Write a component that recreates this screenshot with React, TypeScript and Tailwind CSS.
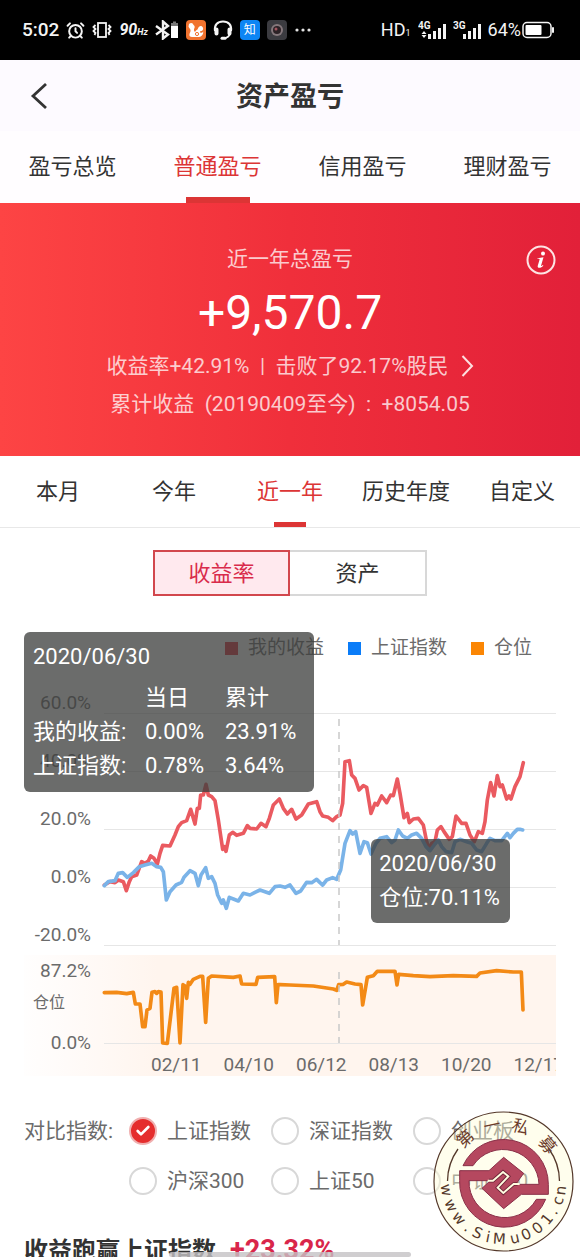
import { useState } from 'react';
import { AlarmClock, Check } from 'lucide-react';
import clsx from 'clsx';

const MAIN_TABS = ['盈亏总览', '普通盈亏', '信用盈亏', '理财盈亏'];
const PERIODS = ['本月', '今年', '近一年', '历史年度', '自定义'];
const INDEXES = ['上证指数', '深证指数', '创业板', '沪深300', '上证50', '中证500'];

const Y_LABELS = ['60.0%', '40.0%', '20.0%', '0.0%', '-20.0%'];
const X_LABELS = ['02/11', '04/10', '06/12', '08/13', '10/20', '12/17'];

type Point = [number, number];

const shift = (points: Point[], dx: number, dy: number) =>
    points.map(([x, y]) => `${x + dx},${y + dy}`).join(' ');

// Series are stored at three units per pixel, one array per half year
const MINE_H1: Point[] = [
    [43, 615], [60, 605], [75, 608], [85, 600], [100, 605], [109, 632], [118, 605], [125, 590], [140, 585], [155, 545],
    [165, 550], [175, 543], [182, 528], [192, 535], [202, 552], [210, 520], [218, 496], [240, 498], [255, 465], [265, 440],
    [275, 428], [290, 422], [302, 388], [315, 432], [322, 385], [328, 385], [332, 345], [340, 345], [348, 313], [355, 345],
    [365, 350], [375, 362], [385, 420], [398, 508], [403, 500], [408, 514], [418, 465], [428, 457], [440, 466], [460, 460],
    [472, 437], [480, 445], [500, 447], [513, 430], [528, 440], [538, 415], [550, 375], [568, 357], [580, 385], [592, 402],
    [605, 388], [618, 417], [635, 405], [655, 372], [680, 365], [690, 395],
];
const MINE_H2: Point[] = [
    [0, 365], [8, 378], [25, 382], [38, 392], [50, 380], [60, 375], [68, 340], [75, 215], [88, 212], [95, 255],
    [105, 265], [117, 300], [130, 287], [140, 292], [153, 370], [165, 340], [172, 345], [185, 318], [200, 338], [212, 315],
    [220, 317], [232, 267], [240, 310], [252, 383], [262, 370], [268, 398], [280, 387], [295, 385], [310, 405], [320, 455],
    [328, 480], [335, 460], [345, 455], [352, 420], [363, 410], [372, 425], [388, 448], [397, 440], [408, 378], [425, 400],
    [438, 400], [450, 435], [463, 455], [475, 425], [487, 430], [495, 395], [502, 330], [512, 278], [522, 318], [532, 257],
    [540, 290], [547, 285], [560, 327], [567, 318], [573, 327], [585, 290], [600, 260], [610, 218],
];
const INDEX_H1: Point[] = [
    [43, 617], [55, 605], [75, 602], [85, 580], [98, 578], [112, 592], [130, 578], [148, 560], [165, 555], [185, 550],
    [200, 560], [212, 562], [220, 575], [229, 660], [240, 635], [258, 615], [275, 607], [282, 592], [300, 572], [315, 580],
    [325, 617], [333, 585], [347, 563], [355, 595], [365, 590], [375, 610], [383, 645], [395, 670], [400, 660], [409, 685],
    [418, 652], [430, 657], [445, 663], [460, 640], [480, 645], [495, 637], [510, 630], [525, 635], [538, 640], [555, 620],
    [570, 618], [585, 622], [600, 615], [618, 640], [632, 633], [650, 607], [665, 608], [680, 598], [690, 608],
];
const INDEX_H2: Point[] = [
    [0, 578], [8, 585], [20, 570], [38, 563], [50, 568], [62, 540], [75, 460], [90, 422], [98, 432], [107, 425],
    [120, 490], [132, 455], [142, 458], [153, 492], [168, 460], [180, 445], [200, 440], [215, 458], [225, 450], [235, 420],
    [248, 438], [262, 445], [275, 435], [290, 430], [305, 445], [318, 470], [330, 482], [345, 462], [355, 450], [365, 470],
    [378, 485], [395, 488], [405, 455], [420, 448], [440, 455], [455, 460], [470, 480], [485, 485], [500, 460], [510, 445],
    [525, 452], [545, 452], [562, 430], [570, 443], [580, 430], [592, 418], [600, 418], [608, 420],
];
const POSITION_H1: Point[] = [
    [313, 128], [350, 127], [380, 131], [400, 127], [406, 162], [420, 162], [428, 230], [435, 230], [441, 180], [450, 175],
    [456, 127], [465, 125], [470, 130], [475, 125], [483, 126], [488, 279], [502, 280], [522, 115], [530, 112], [540, 279],
    [549, 104], [555, 108], [560, 145], [565, 97], [570, 103], [580, 88], [600, 79], [608, 79], [617, 217], [625, 85],
    [635, 78], [700, 82], [720, 78], [725, 102], [768, 103], [773, 82], [824, 80], [829, 158], [834, 104],
];
const POSITION_H2: Point[] = [
    [0, 104], [30, 105], [100, 108], [160, 117], [170, 121], [176, 104], [190, 103], [200, 96], [225, 102], [243, 104],
    [248, 165], [262, 82], [280, 77], [292, 64], [345, 64], [351, 105], [356, 73], [400, 77], [450, 80], [520, 77],
    [590, 79], [600, 69], [650, 62], [700, 66], [724, 66], [729, 180],
];

function Signal({ label, arrows }: { label: string; arrows?: boolean }) {
    return (
        <svg viewBox="0 0 28 20" className="h-5 w-7" fill="#f4f4f4">
            <text x="0" y="9" fontSize="10" fontWeight="700">{label}</text>
            {arrows && <path d="M3.500 14L6 11l2.500 3zM3.500 15L6 18l2.500-3z" />}
            <rect x="10" y="14" width="3" height="5" />
            <rect x="15" y="11" width="3" height="8" />
            <rect x="20" y="8" width="3" height="11" />
            <rect x="25" y="4" width="3" height="15" />
        </svg>
    );
}

function StatusBar() {
    return (
        <div className="flex h-[60px] items-center justify-between bg-black pl-[22px] pr-[26px] text-[#f4f4f4]">
            <div className="flex items-center gap-[7px]">
                <span className="text-[19px] font-medium">5:02</span>
                <AlarmClock className="size-[19px]" strokeWidth={2.5} />
                <svg viewBox="0 0 20 18" className="h-[18px] w-5" fill="none" stroke="#f4f4f4" strokeWidth="1.800" aria-hidden="true">
                    <rect x="6" y="2" width="8" height="14" />
                    <path d="M3.500 4l-2 2 2 2-2 2 2 2-1 2M16.500 4l2 2-2 2 2 2-2 2 1 2" />
                </svg>
                <span className="flex items-baseline font-bold italic">
                    <span className="text-base">90</span>
                    <span className="text-[9px]">Hz</span>
                </span>
                <svg viewBox="0 0 24 20" className="h-5 w-6" aria-hidden="true">
                    <path d="M1 6l12 8.500L8 18.500v-17L13 6 1 14.500" fill="none" stroke="#f4f4f4" strokeWidth="2.400" />
                    <rect x="16" y="3" width="7" height="4" fill="#777" />
                    <rect x="18" y="1.500" width="3" height="2" fill="#777" />
                    <rect x="16" y="6" width="7" height="12" fill="#fff" />
                </svg>
                <svg viewBox="0 0 20 20" className="size-5" aria-hidden="true">
                    <rect width="20" height="20" rx="4" fill="#f1732f" />
                    <path d="M3 4c2-2 4-1 4.500 1 1 .5 1.500 1.500 1 3-1 1.500-.5 3 .5 4 1-2 2.500-2 3-3.500.6-2 2.500-3 4-2 1.800 1.300 1.300 4-.5 4.500-1-.2-1.800.5-1.300 1.500 1 .7 2.500 0 3-1 .3 3.500-2 5.500-5.500 5.500H6c-2 0-3-1.200-2.500-3 .5-1.700 1.300-2.500 1-4C4 8.500 3 8 2.500 6.500z" fill="#fff" />
                    <circle cx="11" cy="14" r="1.600" fill="none" stroke="#f1732f" />
                </svg>
                <svg viewBox="0 0 20 20" className="size-5" fill="none" stroke="#f4f4f4" aria-hidden="true">
                    <path d="M2 11C1 5 4.500 1.500 10 1.500S19 5 18 11M17 14c-1 2.500-3 4-6 4" strokeWidth="2" />
                    <path d="M3.500 9.500v4M16.500 9.500v4" strokeWidth="4" strokeLinecap="round" />
                    <path d="M9 18.200h3" strokeWidth="3" strokeLinecap="round" />
                </svg>
                <span className="flex size-5 items-center justify-center rounded bg-[#0d85f4] text-xs text-white">知</span>
                <svg viewBox="0 0 20 20" className="size-5" aria-hidden="true">
                    <rect width="20" height="20" rx="4" fill="#3b3b40" />
                    <circle cx="10" cy="10" r="6" fill="#85787c" />
                    <circle cx="10" cy="10" r="4" fill="#2c2226" />
                    <circle cx="9" cy="9" r="1.500" fill="#a35560" />
                </svg>
                <svg viewBox="0 0 18 4" className="h-1 w-[18px]" fill="#e4e4e4" aria-hidden="true">
                    <circle cx="3" cy="2" r="1.600" />
                    <circle cx="9" cy="2" r="1.600" />
                    <circle cx="15" cy="2" r="1.600" />
                </svg>
            </div>
            <div className="flex items-center gap-[7px] text-lg">
                <span className="flex items-baseline">
                    HD<span className="text-[9px]">1</span>
                </span>
                <Signal label="4G" arrows />
                <Signal label="3G" />
                <span className="flex items-center">
                    64%
                    <svg viewBox="0 0 33 18" className="h-[18px] w-[33px]" aria-hidden="true">
                        <rect x="2" y="1.500" width="28" height="15" rx="4" fill="none" stroke="#f4f4f4" strokeWidth="1.500" />
                        <rect x="4.500" y="4" width="16" height="10" rx="1" fill="#fff" />
                        <rect x="31" y="6" width="2" height="6" rx="1" fill="#f4f4f4" />
                    </svg>
                </span>
            </div>
        </div>
    );
}

function ProfitChart() {
    return (
        <svg viewBox="0 0 580 400" className="block w-full" role="img" aria-label="收益率走势">
            <defs>
                <linearGradient id="positionBg" x1="0" y1="0" x2="1" y2="0">
                    <stop offset="0" stopColor="#fff5f0" stopOpacity="0.100" />
                    <stop offset="0.250" stopColor="#fff5ee" />
                </linearGradient>
                <clipPath id="plotClip">
                    <rect x="0" y="0" width="556" height="400" />
                </clipPath>
            </defs>
            <rect x="24" y="275" width="532" height="121" fill="url(#positionBg)" />
            <g stroke="#e6e6e6">
                {Y_LABELS.map((label, i) => (
                    <line key={label} x1="104" x2="556" y1={33.5 + i * 58} y2={33.5 + i * 58} />
                ))}
                <line x1="104" x2="556" y1="363.500" y2="363.500" />
            </g>
            <g fill="#6b6b6b" fontSize="19">
                {Y_LABELS.map((label, i) => (
                    <text key={label} x="91" y={29 + i * 58} textAnchor="end">{label}</text>
                ))}
                <text x="91" y="297" textAnchor="end">87.2%</text>
                <text x="33" y="328" fontSize="16">仓位</text>
                <text x="91" y="369" textAnchor="end">0.0%</text>
                <g clipPath="url(#plotClip)">
                    {X_LABELS.map((label, i) => (
                        <text key={label} x={151 + i * 72.5} y="391">{label}</text>
                    ))}
                </g>
            </g>
            <g transform="scale(0.33333)" fill="none" strokeWidth="11" strokeLinejoin="round" strokeLinecap="round">
                <polyline stroke="#ea5a60" points={`${shift(MINE_H1, 270, 0)} ${shift(MINE_H2, 960, 30)}`} />
                <polyline stroke="#7ab3e8" points={`${shift(INDEX_H1, 270, 0)} ${shift(INDEX_H2, 960, 30)}`} />
                <polyline stroke="#f38a16" points={`${shift(POSITION_H1, 0, 810)} ${shift(POSITION_H2, 840, 810)}`} />
            </g>
            <path d="M339 39V265M339 292V363" stroke="#c9c9c9" strokeWidth="1.500" strokeDasharray="7 6" />
        </svg>
    );
}

function DayTooltip() {
    return (
        <div className="absolute top-1.5 left-6 w-1/2 rounded-md bg-[#3c3e3c]/76 px-[9px] pt-2 pb-[9px] text-[22px] leading-[34px] text-white">
            <p>2020/06/30</p>
            <table className="mt-[7px] w-full table-fixed text-left">
                <thead>
                    <tr>
                        <td className="w-28"></td>
                        <th className="w-20 font-normal">当日</th>
                        <th className="font-normal">累计</th>
                    </tr>
                </thead>
                <tbody>
                    <tr>
                        <th className="font-normal">我的收益:</th>
                        <td>0.00%</td>
                        <td>23.91%</td>
                    </tr>
                    <tr>
                        <th className="font-normal">上证指数:</th>
                        <td>0.78%</td>
                        <td>3.64%</td>
                    </tr>
                </tbody>
            </table>
        </div>
    );
}

// Start position and rotation of every glyph set round the seal
const onRing = (angles: number[], radius: number, inward: boolean) => ({
    x: angles.map((a) => (70.5 + radius * Math.sin((a * Math.PI) / 180)).toFixed(1)).join(' '),
    y: angles.map((a) => (70.5 - radius * Math.cos((a * Math.PI) / 180)).toFixed(1)).join(' '),
    rotate: angles.map((a) => (inward ? a - 186 : a + 9).toFixed(1)).join(' '),
});

const SITE_RING = onRing([267, 251, 236, 220, 211, 197, 190, 173, 161, 148, 135, 123, 113, 103], 63, true);
const NAME_RING = onRing([-51, -21, 8, 41], 52, false);

function Seal() {
    return (
        <svg viewBox="0 0 141 141" className="pointer-events-none absolute right-1.5 bottom-[5px] size-[141px]" role="img" aria-label="第一私募">
            <circle cx="70.500" cy="70.500" r="69.500" fill="#fffcd6" fillOpacity="0.450" stroke="#54382a" strokeWidth="1.200" />
            <path d="M14.500 70A56 56 0 0 1 25 38M116 38A56 56 0 0 1 126.500 70" fill="none" stroke="#54382a" strokeWidth="1.300" />
            <text {...NAME_RING} fontSize="17" fill="#6b3a2a">第一私募</text>
            <text {...SITE_RING} fontSize="15" fill="#54382a" className="font-['DejaVu_Sans']">www.SiMu001.cn</text>
            <g transform="translate(20 19) scale(0.33333)" strokeLinejoin="miter">
                <path
                    d="M30 107A134 134 0 0 1 286 163V193H205L152 236L87 175L112 152H48A108 108 0 0 0 250 208H278A134 134 0 0 1 20 152V122H108L152 82L212 130L188 163H258A108 108 0 0 0 60 107Z"
                    fill="#b5485f"
                    stroke="#8a3048"
                    strokeWidth="3"
                />
                {/* Light interlocking hooks inside the diamond */}
                <path d="M108 152H120L150 126L166 139L134 173L151 189L182 162H194" fill="none" stroke="#6e2438" strokeWidth="11" />
                <path d="M104 152H120L150 126L166 139L134 173L151 189L182 162H200" fill="none" stroke="#fffde0" strokeWidth="6" />
            </g>
        </svg>
    );
}

export default function App() {
    const [period, setPeriod] = useState('近一年');
    const [tab, setTab] = useState('普通盈亏');
    const [mode, setMode] = useState('收益率');
    const [index, setIndex] = useState('上证指数');

    return (
        <div className="relative h-screen overflow-hidden bg-white font-[Roboto,'Noto_Sans_CJK_SC',sans-serif] text-[#333]">
            <StatusBar />

            {/* Header */}
            <header className="grid h-[71px] grid-cols-[80px_1fr_80px] items-center bg-[#fdfaff] pt-1">
                <button type="button" aria-label="返回" className="pb-1 pl-[30px]">
                    <svg viewBox="0 0 18 28" className="h-7 w-[18px]" fill="none" stroke="#333" strokeWidth="2.800">
                        <path d="M16 2L3 14l13 12" />
                    </svg>
                </button>
                <h1 className="text-center text-[27px] font-bold">资产盈亏</h1>
            </header>
            <nav className="grid h-[72px] grid-cols-4 bg-[#fffdff] text-[22px]">
                {MAIN_TABS.map((name) => (
                    <button
                        key={name}
                        type="button"
                        onClick={() => setTab(name)}
                        className={clsx('flex flex-col items-center justify-between pt-5', tab === name && 'text-[#dc3535]')}
                    >
                        <span className="leading-8">{name}</span>
                        {tab === name && <span className="h-1.5 w-16 bg-[#dc3535]" />}
                    </button>
                ))}
            </nav>

            {/* Total */}
            <section className="relative flex h-[253px] flex-col items-center bg-linear-to-r from-[#fd4444] via-[#f02f3b] to-[#e22039] pt-10 text-[21px] text-white/75">
                <h2 className="leading-8">近一年总盈亏</h2>
                <p className="mt-2.5 text-5xl leading-14 text-white">+9,570.7</p>
                <a href="#rank" className="mt-1.5 flex items-center gap-3 leading-[38px]">
                    <span className="whitespace-pre">收益率+42.91%  |  击败了92.17%股民</span>
                    <svg viewBox="0 0 13 24" className="h-6 w-[13px]" fill="none" stroke="#fde0e0" strokeWidth="2" aria-hidden="true">
                        <path d="M1.500 2L11 12 1.500 22" />
                    </svg>
                </a>
                <p className="leading-[38px] whitespace-pre">累计收益  (20190409至今)  :  +8054.05</p>
                <button type="button" aria-label="说明" className="absolute top-[42px] right-6">
                    <svg viewBox="0 0 30 30" className="size-[30px]">
                        <circle cx="15" cy="15" r="13.500" fill="none" stroke="#fde4e4" strokeWidth="2" />
                        <circle cx="17" cy="8.500" r="2" fill="#fff" />
                        <path d="M11.500 13.200l6-1-2.400 8.300c-.2.900.4.900 1.700-.5l.6.500c-1.800 2.600-6.300 3.400-5.700.6l1.900-6.500c.2-.8-.8-.8-2.100-.7z" fill="#fff" />
                    </svg>
                </button>
            </section>

            {/* Period */}
            <nav className="grid h-[72px] grid-cols-5 border-b border-[#e8e8e8] text-[22px]">
                {PERIODS.map((name) => (
                    <button
                        key={name}
                        type="button"
                        onClick={() => setPeriod(name)}
                        className={clsx('flex flex-col items-center justify-between pt-5 whitespace-nowrap', period === name && 'text-[#dc3535]')}
                    >
                        <span className="leading-8">{name}</span>
                        {period === name && <span className="h-[5px] w-8 bg-[#dc3535]" />}
                    </button>
                ))}
            </nav>

            <div className="mx-auto mt-[22px] grid h-[46px] w-[274px] grid-cols-2 text-[22px]">
                {['收益率', '资产'].map((name) => (
                    <button
                        key={name}
                        type="button"
                        onClick={() => setMode(name)}
                        className={clsx('border-2', mode === name ? 'border-[#d2474d] bg-[#ffe9ee] text-[#d92b4b]' : 'border-l-0 border-[#d8d8d8]')}
                    >
                        {name}
                    </button>
                ))}
            </div>

            {/* Chart */}
            <section className="relative mt-[30px]">
                <ul className="flex h-[54px] justify-end gap-6 pt-1.5 pr-12 text-[19px] text-[#6b6b6b]">
                    <li className="flex h-8 items-center gap-2.5">
                        <span className="size-[13px] bg-[#e0303c]" />我的收益
                    </li>
                    <li className="flex h-8 items-center gap-2.5">
                        <span className="size-[13px] bg-[#0a7cf8]" />上证指数
                    </li>
                    <li className="flex h-8 items-center gap-2.5">
                        <span className="size-[13px] bg-[#fb8604]" />仓位
                    </li>
                </ul>
                <ProfitChart />
                <DayTooltip />
                <div className="absolute top-[213px] left-[64%] rounded-md bg-[#3c3e3c]/76 py-2 pr-2.5 pl-2 text-[22px] leading-[34px] text-white">
                    <p>2020/06/30</p>
                    <p>仓位:70.11%</p>
                </div>
            </section>

            <div role="radiogroup" aria-labelledby="compare" className="mt-[25px] flex pl-6 text-[21px] text-[#6b6b6b]">
                <span id="compare" className="w-[105px] shrink-0 leading-[52px]">对比指数:</span>
                <div className="grid shrink-0 grid-cols-[142px_142px_142px]">
                    {INDEXES.map((name) => (
                        <label key={name} className="flex h-[50px] items-center gap-2.5 pt-0.5">
                            <span className="relative flex">
                                <input
                                    type="radio"
                                    name="index"
                                    checked={index === name}
                                    onChange={() => setIndex(name)}
                                    className="size-7 appearance-none rounded-full border-2 border-[#d8d8d8] bg-white checked:border-[#f0b0b0] checked:bg-[#e52d2d]"
                                />
                                {index === name && <Check className="pointer-events-none absolute inset-1.5 size-4 text-white" strokeWidth={4} />}
                            </span>
                            <span className="leading-8">{name}</span>
                        </label>
                    ))}
                </div>
            </div>

            <h2 className="mt-[25px] flex items-baseline gap-3.5 pl-6 text-2xl leading-10 font-bold whitespace-nowrap">
                收益跑赢上证指数 <span className="text-[27px] text-[#d9264a]">+23.32%</span>
            </h2>

            <Seal />
            <div className="absolute inset-x-[169px] bottom-0 h-[5px] rounded-full bg-[#c4c2c4]/80" />
        </div>
    );
}
